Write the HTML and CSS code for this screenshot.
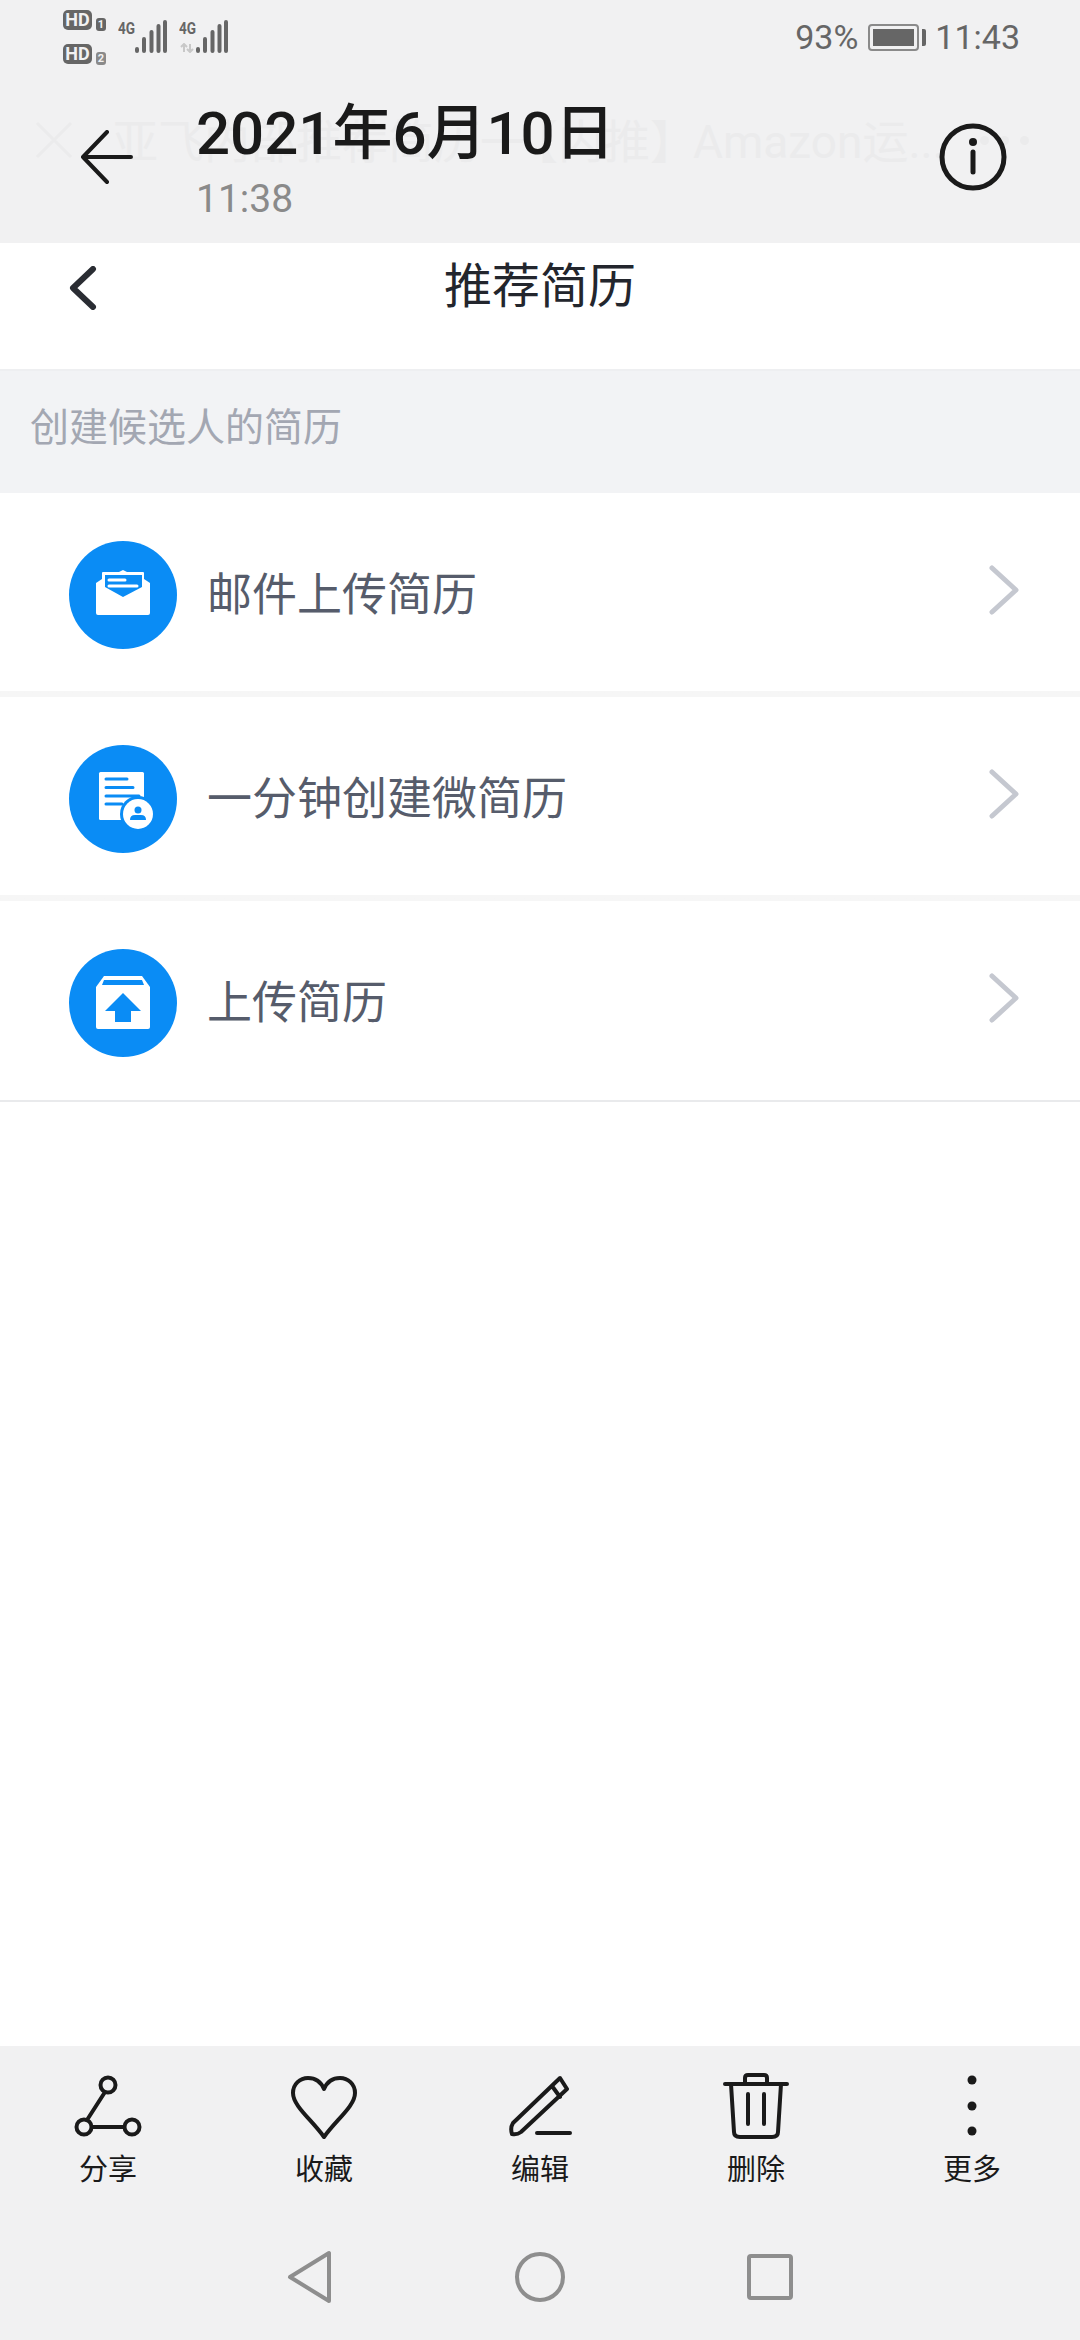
FILE: index.html
```html
<!DOCTYPE html>
<html lang="zh-CN">

<head>
  <meta name="viewport" content="width=device-width, initial-scale=1.0">
  <title>推荐简历</title>
  <link rel="stylesheet" href="styles.css">
</head>

<body>
  <div id="container">
    <div class="top">
      <!-- page title showing through the preview header -->
      <div class="ghost">
        <svg class="ghostClose" viewBox="0 0 38 38"><path d="M2 2L36 36M36 2L2 36" /></svg>
        <span class="ghostText">亚飞内部推荐简历一<span class="ghostTag">【内推】</span>Amazon运...</span>
        <span class="ghostDots"><i></i><i></i><i></i></span>
      </div>

      <div class="status">
        <div class="hdGroup">
          <div class="hdLine"><span class="hd">HD</span><span class="sim">1</span></div>
          <div class="hdLine"><span class="hd">HD</span><span class="sim sim2">2</span></div>
        </div>
        <div class="signal">
          <span class="netType">4G</span>
          <svg class="bars" viewBox="0 0 32 32"><path d="M2 28V30M9 18V30M16.500 11V30M23.500 5V30M30 1V30" /></svg>
        </div>
        <div class="signal">
          <span class="netType">4G</span>
          <svg class="dataArrows" viewBox="0 0 14 10"><path d="M4 9V2M1 4L4 1L7 4M10 1V8M7 6L10 9L13 6" /></svg>
          <svg class="bars" viewBox="0 0 32 32"><path d="M2 28V30M9 18V30M16.500 11V30M23.500 5V30M30 1V30" /></svg>
        </div>
        <div class="statusRight">
          <span>93%</span>
          <div class="battery"><div class="batteryFill"></div></div>
          <div class="batteryTip"></div>
          <span class="clock">11:43</span>
        </div>
      </div>

      <div class="titleBar">
        <svg class="backArrow" viewBox="0 0 56 56"><path d="M51 27H3M27 2L3 27L27 52" /></svg>
        <div class="titleText">
          <div class="date">2021年6月10日</div>
          <div class="time">11:38</div>
        </div>
        <svg class="infoIcon" viewBox="0 0 68 68">
          <circle cx="34" cy="34" r="31" />
          <circle class="dot" cx="34" cy="19" r="4" />
          <path d="M34 29V49" />
        </svg>
      </div>
    </div>

    <div class="navBar">
      <svg class="chevronBack" viewBox="0 0 30 44"><path d="M25 3L5 22L25 41" /></svg>
      <div class="navTitle">推荐简历</div>
    </div>

    <div class="sectionLabel">创建候选人的简历</div>

    <div class="list">
      <div class="row">
        <svg class="rowIcon" viewBox="0 0 108 108">
          <circle class="disc" cx="54" cy="54" r="54" />
          <path class="paper" d="M33 38V32Q33 31 34 31H50L54 29L58 31H74Q75 31 75 32V38L81 42V72Q81 74 79 74H29Q27 74 27 72V42Z" />
          <path class="ink" d="M36 34H73V46L54 56L36 46Z" />
          <path class="paperLine" d="M40 39H56M40 45H68" />
        </svg>
        <span class="rowText">邮件上传简历</span>
        <svg class="rowArrow" viewBox="0 0 32 50"><path d="M3 3L27 25L3 47" /></svg>
      </div>
      <div class="row">
        <svg class="rowIcon" viewBox="0 0 108 108">
          <circle class="disc" cx="54" cy="54" r="54" />
          <rect class="paper" x="30" y="27" width="45" height="48" rx="1.500" />
          <path class="inkLine" d="M37 34H58M37 42.500H64M37 51H70M37 59H53" />
          <circle class="disc" cx="69" cy="69" r="18" />
          <circle class="paper" cx="69" cy="69" r="15" />
          <circle class="ink" cx="69" cy="65" r="3.500" />
          <path class="ink" d="M61 75Q61 70 66 70H72Q77 70 77 75Z" />
        </svg>
        <span class="rowText">一分钟创建微简历</span>
        <svg class="rowArrow" viewBox="0 0 32 50"><path d="M3 3L27 25L3 47" /></svg>
      </div>
      <div class="row">
        <svg class="rowIcon" viewBox="0 0 108 108">
          <circle class="disc" cx="54" cy="54" r="54" />
          <path class="paper" d="M35 27H73L81 38V78Q81 80 79 80H29Q27 80 27 78V38Z" />
          <path class="ink" d="M35 31H73L75 36H33Z" />
          <path class="ink" d="M54 44L72 62H62V73H46V62H36Z" />
        </svg>
        <span class="rowText">上传简历</span>
        <svg class="rowArrow" viewBox="0 0 32 50"><path d="M3 3L27 25L3 47" /></svg>
      </div>
    </div>

    <div class="blank"></div>

    <div class="toolbar">
      <div class="tool">
        <svg class="toolIcon" viewBox="0 0 72 72">
          <circle cx="36" cy="13" r="7.500" />
          <circle cx="12" cy="55" r="7.500" />
          <circle cx="60" cy="55" r="7.500" />
          <path d="M33 20L15 48M20 55H52" />
        </svg>
        <span>分享</span>
      </div>
      <div class="tool">
        <svg class="toolIcon" viewBox="0 0 72 72">
          <path d="M36 65C24 48 5 34 5 21C5 12 12 6 20 6C27 6 33 10 36 17C39 10 45 6 52 6C60 6 67 12 67 21C67 34 48 48 36 65Z" />
        </svg>
        <span>收藏</span>
      </div>
      <div class="tool">
        <svg class="toolIcon" viewBox="0 0 72 72">
          <path d="M56 6L63 17L17 60Q13 63 8 62Q6 56 9 51ZM48 14L56 25M33 61H66" />
        </svg>
        <span>编辑</span>
      </div>
      <div class="tool">
        <svg class="toolIcon" viewBox="0 0 72 72">
          <path d="M5 12H67M25 12V6Q25 3 28 3H44Q47 3 47 6V12M11 12L14 60Q14 65 20 65H52Q58 65 58 60L61 12M28 22V52M44 22V52" />
        </svg>
        <span>删除</span>
      </div>
      <div class="tool">
        <svg class="toolIcon" viewBox="0 0 72 72">
          <circle class="dot" cx="36" cy="8" r="4.500" />
          <circle class="dot" cx="36" cy="34" r="4.500" />
          <circle class="dot" cx="36" cy="59" r="4.500" />
        </svg>
        <span>更多</span>
      </div>
    </div>

    <div class="sysNav">
      <svg class="sysIcon" viewBox="0 0 52 56"><path d="M45 4V52L6 28Z" /></svg>
      <svg class="sysIcon" viewBox="0 0 52 56"><circle cx="26" cy="28" r="23" /></svg>
      <svg class="sysIcon" viewBox="0 0 52 56"><rect x="5" y="7" width="42" height="42" rx="2" /></svg>
    </div>
  </div>
</body>

</html>
```

FILE: styles.css
```css
:root {
  font-family: 'Roboto', 'Noto Sans CJK SC', sans-serif;
}

body {
  margin: 0;
  background-color: white;
}

#container {
  width: 1080px;
  height: 2340px;
  display: flex;
  flex-direction: column;
  overflow: hidden;
}

/* Header */
.top {
  position: relative;
  height: 243px;
  background-color: #f1f1f2;
  flex-shrink: 0;
}

.ghost {
  position: absolute;
  top: 112px;
  left: 35px;
  width: 1000px;
  display: flex;
  align-items: center;
  color: #ebebec;
  font-size: 46px;
  line-height: 60px;
}

.ghostClose {
  width: 38px;
  height: 38px;
  margin-top: -4px;
  margin-right: 39px;
}

.ghostClose path {
  fill: none;
  stroke: #ebebec;
  stroke-width: 3;
}

.ghostText {
  white-space: nowrap;
}

.ghostTag {
  margin-left: -14px;
  margin-right: -3px;
}

.ghostDots {
  display: flex;
  gap: 11px;
  position: absolute;
  left: 945px;
  top: 24px;
}

.ghostDots i {
  display: block;
  width: 9px;
  height: 9px;
  border-radius: 50%;
  background-color: #ebebec;
}

.status {
  position: relative;
  display: flex;
  align-items: flex-start;
  height: 76px;
  padding: 10px 60px 0 63px;
  box-sizing: border-box;
  color: #666;
}

.hdGroup {
  display: flex;
  flex-direction: column;
  gap: 14px;
  margin-right: 12px;
}

.hdLine {
  display: flex;
  align-items: flex-end;
  gap: 4px;
  height: 20px;
}

.hd {
  width: 29px;
  height: 20px;
  line-height: 20px;
  border-radius: 5px;
  background-color: #666;
  color: #f1f1f2;
  font-size: 18px;
  font-weight: 700;
  text-align: center;
}

.sim {
  width: 10px;
  height: 13px;
  line-height: 13px;
  margin-bottom: -1px;
  border-radius: 3px;
  background-color: #666;
  color: #f1f1f2;
  font-size: 11px;
  font-weight: 700;
  text-align: center;
}

.sim2 {
  background-color: #8a8a8a;
}

.signal {
  position: relative;
  display: flex;
  align-items: flex-start;
  margin-right: 12px;
}

.netType {
  width: 17px;
  margin-top: 10px;
  font-size: 17px;
  line-height: 16px;
  font-weight: 700;
  transform: scaleX(0.8);
  transform-origin: left;
}

.dataArrows {
  position: absolute;
  left: 1px;
  top: 33px;
  width: 14px;
  height: 10px;
}

.dataArrows path {
  fill: none;
  stroke: #c8c8c8;
  stroke-width: 2;
}

.bars {
  width: 32px;
  height: 32px;
  margin-top: 11px;
  overflow: visible;
}

.bars path {
  fill: none;
  stroke: #666;
  stroke-width: 4;
  stroke-linecap: round;
}

.statusRight {
  display: flex;
  align-items: center;
  margin-left: auto;
  margin-top: 8px;
  font-size: 34px;
  line-height: 38px;
}

.battery {
  width: 51px;
  height: 27px;
  box-sizing: border-box;
  margin-left: 10px;
  padding: 3px;
  border: 2px solid #8a8a8a;
  border-radius: 4px;
}

.batteryFill {
  height: 100%;
  background-color: #666;
}

.batteryTip {
  width: 4px;
  height: 17px;
  margin-left: 3px;
  border-radius: 0 2px 2px 0;
  background-color: #666;
}

.clock {
  margin-left: 9px;
}

.titleBar {
  position: relative;
  display: flex;
  align-items: flex-start;
  padding-left: 80px;
}

.backArrow {
  width: 56px;
  height: 56px;
  margin-top: 54px;
  margin-right: 60px;
}

.backArrow path {
  fill: none;
  stroke: #1a1a1a;
  stroke-width: 4;
  stroke-linecap: round;
  stroke-linejoin: round;
}

.titleText {
  display: flex;
  flex-direction: column;
}

.date {
  margin-top: 18px;
  font-size: 60px;
  line-height: 80px;
  font-weight: 500;
  color: #1a1a1a;
}

.time {
  margin-top: 1px;
  font-size: 39px;
  line-height: 48px;
  color: #8a8a8a;
}

.infoIcon {
  width: 68px;
  height: 68px;
  margin-left: auto;
  margin-right: 73px;
  margin-top: 47px;
}

.infoIcon circle {
  fill: none;
  stroke: #1a1a1a;
  stroke-width: 5;
}

.infoIcon .dot {
  fill: #1a1a1a;
  stroke: none;
}

.infoIcon path {
  fill: none;
  stroke: #1a1a1a;
  stroke-width: 5;
  stroke-linecap: round;
}

/* Nav bar of the page */
.navBar {
  position: relative;
  display: flex;
  justify-content: center;
  height: 128px;
  box-sizing: border-box;
  padding-top: 14px;
  border-bottom: 2px solid #eeeff1;
  flex-shrink: 0;
}

.chevronBack {
  position: absolute;
  left: 68px;
  top: 23px;
  width: 30px;
  height: 44px;
}

.chevronBack path {
  fill: none;
  stroke: #2a2d33;
  stroke-width: 6;
  stroke-linecap: round;
  stroke-linejoin: round;
}

.navTitle {
  font-size: 48px;
  line-height: 60px;
  color: #23262d;
}

.sectionLabel {
  height: 122px;
  line-height: 114px;
  padding-left: 30px;
  background-color: #f2f3f5;
  color: #a3a7b2;
  font-size: 39px;
  flex-shrink: 0;
}

/* List rows */
.list {
  display: flex;
  flex-direction: column;
}

.row {
  display: flex;
  align-items: center;
  padding: 48px 59px 42px 69px;
  border-bottom: 6px solid #f0f0f1;
  border-image: linear-gradient(#ebebec, #f6f6f6) 1;
}

.row:last-child {
  padding-bottom: 43px;
  border-bottom: 2px solid #e9eaec;
  border-image: none;
}

.rowIcon {
  width: 108px;
  height: 108px;
  margin-right: 30px;
  flex-shrink: 0;
}

.disc {
  fill: #0a8cf5;
}

.paper {
  fill: white;
}

.ink {
  fill: #0a8cf5;
}

.inkLine {
  fill: none;
  stroke: #0a8cf5;
  stroke-width: 3;
  stroke-linecap: round;
}

.paperLine {
  fill: none;
  stroke: white;
  stroke-width: 3;
  stroke-linecap: round;
}

.rowText {
  margin-top: 2px;
  font-size: 45px;
  line-height: 60px;
  color: #565c6b;
}

.rowArrow {
  width: 32px;
  height: 50px;
  margin-left: auto;
  margin-top: -11px;
}

.rowArrow path {
  fill: none;
  stroke: #c5c8d0;
  stroke-width: 5;
  stroke-linecap: round;
  stroke-linejoin: round;
}

.blank {
  flex: 1;
}

/* Bottom toolbar */
.toolbar {
  display: grid;
  grid-template-columns: repeat(5, 216px);
  height: 174px;
  box-sizing: border-box;
  padding-top: 26px;
  background-color: #f1f1f2;
  flex-shrink: 0;
}

.tool {
  display: flex;
  flex-direction: column;
  align-items: center;
  color: #1a1a1a;
  font-size: 29px;
  line-height: 40px;
}

.toolIcon {
  width: 72px;
  height: 72px;
  margin-bottom: 6px;
}

.toolIcon path,
.toolIcon circle {
  fill: none;
  stroke: #1a1a1a;
  stroke-width: 4;
  stroke-linecap: round;
  stroke-linejoin: round;
}

.toolIcon .dot {
  fill: #1a1a1a;
  stroke: none;
}

.sysNav {
  display: flex;
  justify-content: center;
  gap: 178px;
  height: 120px;
  box-sizing: border-box;
  padding-top: 29px;
  background-color: #f1f1f2;
  flex-shrink: 0;
}

.sysIcon {
  width: 52px;
  height: 56px;
}

.sysIcon path,
.sysIcon circle,
.sysIcon rect {
  fill: none;
  stroke: #8e8e8e;
  stroke-width: 4;
  stroke-linejoin: round;
}
```
